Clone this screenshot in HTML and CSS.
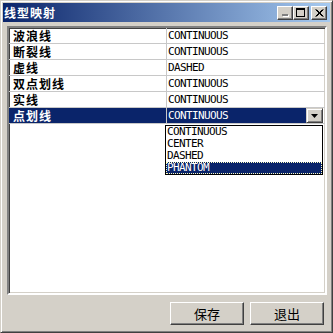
FILE: index.html
```html
<!DOCTYPE html>
<html>
<head>
<meta charset="utf-8">
<link rel="stylesheet" href="styles.css">
</head>
<body>
<div class="window">
  <div class="titlebar">
    <span class="title">线型映射</span>
    <div class="tb-buttons">
      <span class="tb-btn"><svg width="10" height="9" viewBox="0 0 10 9"><rect x="3" y="7" width="6" height="2" fill="#ffffff"/><rect x="2" y="6" width="6" height="2" fill="#808080"/></svg></span>
      <span class="tb-btn"><svg width="10" height="9" viewBox="0 0 10 9"><rect x="0.5" y="0.5" width="8" height="8" fill="none" stroke="#000"/><rect x="0" y="0" width="9" height="2" fill="#000"/></svg></span>
      <span class="tb-btn close"><svg width="9" height="8" viewBox="0 0 9 8"><path d="M0.5 0.5 L7.5 7.5 M1.5 0.5 L8.5 7.5 M7.5 0.5 L0.5 7.5 M8.5 0.5 L1.5 7.5" stroke="#000" stroke-width="1"/></svg></span>
    </div>
  </div>
  <div class="client">
    <div class="grid">
      <div class="row"><div class="c1">波浪线</div><div class="c2">CONTINUOUS</div></div>
      <div class="row"><div class="c1">断裂线</div><div class="c2">CONTINUOUS</div></div>
      <div class="row"><div class="c1">虚线</div><div class="c2">DASHED</div></div>
      <div class="row"><div class="c1">双点划线</div><div class="c2">CONTINUOUS</div></div>
      <div class="row"><div class="c1">实线</div><div class="c2">CONTINUOUS</div></div>
      <div class="row sel">
        <div class="c1">点划线</div>
        <div class="c2 combo">
          <span class="combo-text">CONTINUOUS</span>
          <span class="combo-btn"><svg width="7" height="4" viewBox="0 0 7 4"><path d="M0 0 H7 L3.5 4 Z" fill="#000"/></svg></span>
        </div>
      </div>
      <div class="dropdown">
        <div class="item">CONTINUOUS</div>
        <div class="item">CENTER</div>
        <div class="item">DASHED</div>
        <div class="item active">PHANTOM</div>
      </div>
    </div>
    <div class="footer">
      <button class="btn">保存</button>
      <button class="btn">退出</button>
    </div>
  </div>
</div>
</body>
</html>
```

FILE: styles.css
```css
html, body {
  margin: 0;
  padding: 0;
  background: #d4d0c8;
}
body {
  font-family: "Noto Sans CJK SC", sans-serif;
}
.window {
  width: 333px;
  height: 333px;
  box-sizing: border-box;
  background: #d4d0c8;
  border: 1px solid;
  border-color: #d4d0c8 #404040 #404040 #d4d0c8;
  box-shadow: inset 1px 1px #ffffff, inset -1px -1px #808080;
  padding: 2px;
  display: flex;
  flex-direction: column;
}
.titlebar {
  height: 19px;
  flex: none;
  background: linear-gradient(to right, #0a246a, #a6caf0);
  display: flex;
  align-items: center;
  padding-left: 1px;
}
.title {
  color: #ffffff;
  font-weight: bold;
  font-size: 12px;
  letter-spacing: 1px;
  line-height: 19px;
  flex: 1;
}
.tb-buttons {
  display: flex;
  align-items: center;
  margin-right: 3px;
}
.tb-btn {
  width: 16px;
  height: 14px;
  box-sizing: border-box;
  background: #d4d0c8;
  border: 1px solid;
  border-color: #ffffff #404040 #404040 #ffffff;
  box-shadow: inset -1px -1px #808080;
  display: flex;
  align-items: center;
  justify-content: center;
}
.tb-btn.close {
  margin-left: 2px;
}
.client {
  flex: 1;
  display: flex;
  flex-direction: column;
  padding: 4px 3px 5px 4px;
  min-height: 0;
}
.grid {
  flex: 1;
  position: relative;
  background: #ffffff;
  border: 2px solid;
  border-color: #808080 #ffffff #ffffff #808080;
  box-shadow: inset 1px 1px #404040, inset -1px -1px #d4d0c8;
}
.row {
  display: flex;
  height: 16px;
  box-sizing: border-box;
  border-bottom: 1px solid #c8c8c8;
}
.c1 {
  width: 158px;
  box-sizing: border-box;
  border-right: 1px solid #c8c8c8;
  padding-left: 4px;
  font-weight: bold;
  font-size: 12px;
  letter-spacing: 1px;
  line-height: 15px;
  color: #000;
  white-space: nowrap;
  overflow: hidden;
}
.c2 {
  flex: 1;
  padding-left: 1px;
  font-family: "DejaVu Sans Mono", monospace;
  font-size: 11px;
  letter-spacing: -0.62px;
  line-height: 15px;
  color: #000;
}
.row.sel .c1 {
  background: #0a246a;
  color: #ffffff;
}
.combo {
  display: flex;
  padding-left: 0;
}
.combo-text {
  flex: 1;
  background: #0a246a;
  color: #ffffff;
  padding-left: 1px;
}
.combo-btn {
  width: 17px;
  margin-right: 2px;
  box-sizing: border-box;
  background: #d4d0c8;
  border: 1px solid;
  border-color: #d4d0c8 #404040 #404040 #d4d0c8;
  box-shadow: inset 1px 1px #ffffff, inset -1px -1px #808080;
  display: flex;
  align-items: center;
  justify-content: center;
}
.dropdown {
  position: absolute;
  left: 156px;
  top: 97px;
  width: 158px;
  box-sizing: border-box;
  background: #ffffff;
  border: 1px solid #000000;
  font-family: "DejaVu Sans Mono", monospace;
  font-size: 11px;
  letter-spacing: -0.62px;
}
.item {
  height: 12px;
  line-height: 12px;
  padding-left: 1px;
  color: #000;
  overflow: hidden;
}
.item.active {
  background: #0a246a;
  color: #ffffff;
  outline: 1px dotted #ffffc0;
  outline-offset: -1px;
}
.footer {
  flex: none;
  display: flex;
  justify-content: flex-end;
  gap: 6px;
  padding-top: 7px;
  padding-right: 3px;
}
.btn {
  width: 74px;
  height: 23px;
  box-sizing: border-box;
  margin: 0;
  padding: 0;
  background: #d4d0c8;
  border: 1px solid;
  border-color: #ffffff #404040 #404040 #ffffff;
  box-shadow: inset -1px -1px #808080;
  font-family: "Noto Sans CJK SC", sans-serif;
  font-size: 13px;
  color: #000;
}
```
